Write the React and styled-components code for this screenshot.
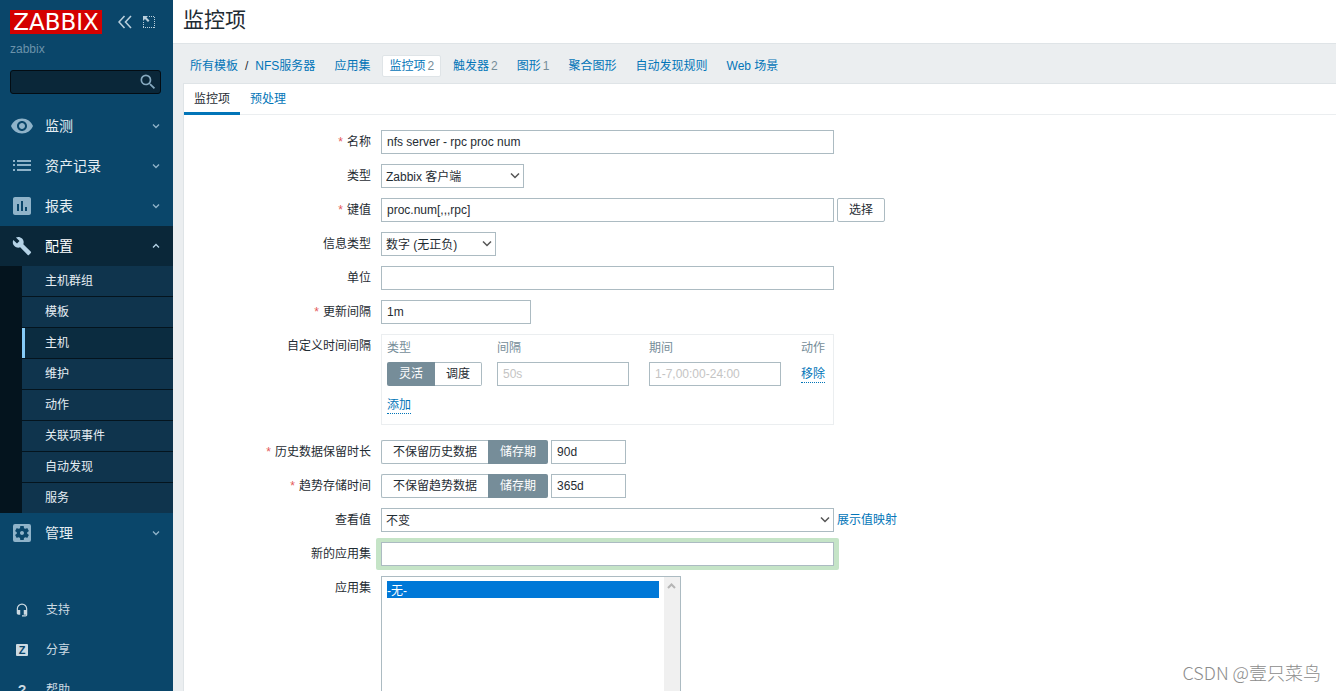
import { useState } from "react";
import styled, { createGlobalStyle, css } from "styled-components";
import {
  MdAssessment,
  MdBuild,
  MdHeadsetMic,
  MdSearch,
  MdSettingsApplications,
  MdVisibility,
} from "react-icons/md";

const ListIcon = () => (
  <svg width="24" height="24" viewBox="0 0 24 24" fill="currentColor">
    <path d="M3 6h2v2H3zM7 6h14v2H7zM3 10h2v2H3zM7 10h14v2H7zM3 15h2v2H3zM7 15h14v2H7z" />
  </svg>
);

const Chevron = ({ up }) => (
  <svg width="8" height="8" viewBox="0 0 8 8" fill="none" stroke="currentColor" strokeWidth="1.3">
    <path d={up ? "M1 5.5 4 2.5 7 5.5" : "M1 2.5 4 5.5 7 2.5"} />
  </svg>
);

const subItems = ["主机群组", "模板", "主机", "维护", "动作", "关联项事件", "自动发现", "服务"];

const crumbs = [
  { text: "应用集" },
  { text: "监控项", count: 2, selected: true },
  { text: "触发器", count: 2 },
  { text: "图形", count: 1 },
  { text: "聚合图形" },
  { text: "自动发现规则" },
  { text: "Web 场景" },
];

const MenuItem = ({ icon, text, open }) => (
  <MenuLink href="#" $open={open}>
    <MenuIcon>{icon}</MenuIcon>
    <span>{text}</span>
    <MenuArrow>
      <Chevron up={open} />
    </MenuArrow>
  </MenuLink>
);

const Sidebar = () => (
  <Aside>
    <LogoRow>
      <Logo href="#">ZABBIX</Logo>
      <IconButton type="button" aria-label="收起">
        <svg width="14" height="14" viewBox="0 0 14 14" fill="none" stroke="currentColor" strokeWidth="1.6">
          <path d="M6.5 1 1 7l5.5 6M13 1 7.5 7 13 13" />
        </svg>
      </IconButton>
      <IconButton type="button" aria-label="隐藏">
        <svg width="14" height="14" viewBox="0 0 14 14" fill="none" stroke="currentColor">
          <path d="M7 1.500h6M12.500 2v11M12 12.500H1M1.500 12V7" strokeDasharray="1 1" />
          <path d="M1 1h5L4.500 2.500 7.500 5.500 6 7 3 4 1 6z" fill="currentColor" stroke="none" />
        </svg>
      </IconButton>
    </LogoRow>
    <ServerName>zabbix</ServerName>
    <Search>
      <input type="text" aria-label="搜索" />
      <button type="submit" aria-label="搜索">
        <MdSearch size={20} />
      </button>
    </Search>
    <nav>
      <MenuItem icon={<MdVisibility size={24} />} text="监测" />
      <MenuItem icon={<ListIcon />} text="资产记录" />
      <MenuItem icon={<MdAssessment size={24} />} text="报表" />
      <MenuItem icon={<MdBuild size={20} />} text="配置" open />
      <SubMenu>
        {subItems.map((item) => (
          <li key={item}>
            <SubLink href="#" $active={item === "主机"}>
              {item}
            </SubLink>
          </li>
        ))}
      </SubMenu>
      <MenuItem icon={<MdSettingsApplications size={24} />} text="管理" />
    </nav>
    <UserNav>
      <UserLink href="#">
        <MenuIcon $light>
          <MdHeadsetMic size={14} />
        </MenuIcon>
        支持
      </UserLink>
      <UserLink href="#">
        <MenuIcon $light>
          <ShareMark>Z</ShareMark>
        </MenuIcon>
        分享
      </UserLink>
      <UserLink href="#">
        <MenuIcon $light>
          <HelpMark>?</HelpMark>
        </MenuIcon>
        帮助
      </UserLink>
    </UserNav>
  </Aside>
);

const Field = ({ label, id, required, children }) => (
  <Row>
    <Label htmlFor={id} $required={required}>
      {label}
    </Label>
    <Control>{children}</Control>
  </Row>
);

const Dropdown = ({ id, width, options }) => (
  <SelectWrap $width={width}>
    <select id={id}>
      {options.map((option) => (
        <option key={option}>{option}</option>
      ))}
    </select>
    <svg width="10" height="8" viewBox="0 0 10 8" fill="none" stroke="#555" strokeWidth="1.5">
      <path d="M1 1.500 5 5.500 9 1.500" />
    </svg>
  </SelectWrap>
);

const RadioGroup = ({ name, options, initial }) => {
  const [value, setValue] = useState(initial);

  return (
    <Segments id={name} role="radiogroup">
      {options.map((option) => (
        <label key={option}>
          <input
            type="radio"
            name={name}
            checked={value === option}
            onChange={() => setValue(option)}
          />
          <span>{option}</span>
        </label>
      ))}
    </Segments>
  );
};

const ItemForm = () => (
  <Form>
    <Field label="名称" id="name" required>
      <TextInput id="name" defaultValue="nfs server - rpc proc num" />
    </Field>
    <Field label="类型" id="type">
      <Dropdown id="type" width={143} options={["Zabbix 客户端"]} />
    </Field>
    <Field label="键值" id="key" required>
      <TextInput id="key" defaultValue="proc.num[,,,rpc]" />
      <Button type="button">选择</Button>
    </Field>
    <Field label="信息类型" id="value_type">
      <Dropdown id="value_type" width={115} options={["数字 (无正负)"]} />
    </Field>
    <Field label="单位" id="units">
      <TextInput id="units" />
    </Field>
    <Field label="更新间隔" id="delay" required>
      <TextInput id="delay" $width={150} defaultValue="1m" />
    </Field>
    <Field label="自定义时间间隔" id="interval_type">
      <IntervalBox>
        <table>
          <thead>
            <tr>
              <th>类型</th>
              <th>间隔</th>
              <th>期间</th>
              <th>动作</th>
            </tr>
          </thead>
          <tbody>
            <tr>
              <td>
                <RadioGroup name="interval_type" options={["灵活", "调度"]} initial="灵活" />
              </td>
              <td>
                <TextInput $width={132} placeholder="50s" aria-label="间隔" />
              </td>
              <td>
                <TextInput $width={132} placeholder="1-7,00:00-24:00" aria-label="期间" />
              </td>
              <td>
                <DottedButton type="button">移除</DottedButton>
              </td>
            </tr>
          </tbody>
        </table>
        <DottedButton type="button">添加</DottedButton>
      </IntervalBox>
    </Field>
    <Field label="历史数据保留时长" id="history" required>
      <RadioGroup name="history_mode" options={["不保留历史数据", "储存期"]} initial="储存期" />
      <TextInput id="history" $width={75} defaultValue="90d" />
    </Field>
    <Field label="趋势存储时间" id="trends" required>
      <RadioGroup name="trends_mode" options={["不保留趋势数据", "储存期"]} initial="储存期" />
      <TextInput id="trends" $width={75} defaultValue="365d" />
    </Field>
    <Field label="查看值" id="valuemap">
      <Dropdown id="valuemap" width={453} options={["不变"]} />
      <Link href="#">展示值映射</Link>
    </Field>
    <Field label="新的应用集" id="new_application">
      <Highlight>
        <TextInput id="new_application" />
      </Highlight>
    </Field>
    <Field label="应用集" id="applications">
      <ListBox>
        <select id="applications" multiple defaultValue={["0"]}>
          <option value="0">-无-</option>
        </select>
        <ScrollTrack>
          <svg width="9" height="8" viewBox="0 0 9 8" fill="none" stroke="#b5b5b5" strokeWidth="2">
            <path d="M1 6 4.500 2.500 8 6" />
          </svg>
        </ScrollTrack>
      </ListBox>
    </Field>
  </Form>
);

const App = () => (
  <>
    <GlobalStyle />
    <Page>
      <Sidebar />
      <Main>
        <Header>
          <h1>监控项</h1>
        </Header>
        <Crumbs>
          <Path>
            <Link href="#">所有模板</Link>
            <span>/</span>
            <Link href="#">NFS服务器</Link>
          </Path>
          {crumbs.map(({ text, count, selected }) => (
            <Crumb key={text} href="#" $selected={selected}>
              {text}
              {count && <small>{count}</small>}
            </Crumb>
          ))}
        </Crumbs>
        <Card>
          <Tabs role="tablist">
            <Tab type="button" role="tab" aria-selected="true" $active>
              监控项
            </Tab>
            <Tab type="button" role="tab" aria-selected="false">
              预处理
            </Tab>
          </Tabs>
          <ItemForm />
        </Card>
      </Main>
      <Watermark>CSDN @壹只菜鸟</Watermark>
    </Page>
  </>
);

const GlobalStyle = createGlobalStyle`
  * {
    box-sizing: border-box;
  }

  body {
    margin: 0;
    color: #1f2c33;
    background: #ebeef0;
  }

  body, input, select, button {
    font-family: "Liberation Sans", "Noto Sans CJK SC", sans-serif;
    font-size: 12px;
    line-height: 18px;
  }

  a {
    text-decoration: none;
  }

  svg {
    display: block;
  }
`;

const Page = styled.div`
  position: relative;
  display: flex;
  height: 100vh;
  overflow: hidden;
`;

const Aside = styled.aside`
  flex: 0 0 173px;
  min-width: 0;
  background: #0a466a;
`;

const LogoRow = styled.div`
  display: flex;
  align-items: center;
  gap: 10px;
  padding: 10px 0 0 10px;
`;

const Logo = styled.a`
  width: 92px;
  margin-right: 6px;
  background: #d40000;
  color: #fff;
  font-family: "DejaVu Sans", sans-serif;
  font-size: 23px;
  line-height: 24px;
  text-align: center;
`;

const IconButton = styled.button`
  padding: 0;
  border: 0;
  background: none;
  color: #b9cedb;
`;

const ServerName = styled.div`
  padding: 6px 10px 0;
  color: #6c93aa;
`;

const Search = styled.form`
  display: flex;
  align-items: center;
  height: 24px;
  margin: 12px 12px 12px 10px;
  border: 1px solid #030c13;
  border-radius: 3px;
  background: #0a2739;

  input {
    flex: 1;
    width: 0;
    min-width: 0;
    padding: 0 6px;
    border: 0;
    background: none;
    color: #fff;
    outline: none;
  }

  button {
    padding: 0 2px 0 0;
    border: 0;
    background: none;
    color: #86a9bf;
  }
`;

const MenuLink = styled.a`
  display: flex;
  align-items: center;
  height: 40px;
  padding-right: 13px;
  background: ${({ $open }) => ($open ? "#0a2739" : "transparent")};
  color: ${({ $open }) => ($open ? "#fff" : "#e6eef3")};
  font-size: 14px;
  line-height: 20px;

  svg {
    color: ${({ $open }) => ($open ? "#b4d2e6" : "#8fb3c9")};
  }
`;

const MenuIcon = styled.span`
  display: flex;
  justify-content: center;
  width: ${({ $light }) => ($light ? "46px" : "45px")};
  padding-right: ${({ $light }) => ($light ? "2px" : "1px")};
  color: #ccdae2;
`;

const MenuArrow = styled.span`
  margin-left: auto;
`;

const SubMenu = styled.ul`
  margin: 0;
  padding: 0;
  border-left: 22px solid #04141e;
  background: #04141e;
  list-style: none;

  li + li {
    padding-top: 1px;
  }
`;

const SubLink = styled.a`
  display: block;
  padding: 6px 0 6px 20px;
  border-left: 3px solid ${({ $active }) => ($active ? "#86cbf7" : "#0f344d")};
  background: ${({ $active }) => ($active ? "#0b2c40" : "#0f344d")};
  color: #e6eef3;
`;

const UserNav = styled.nav`
  margin-top: 37px;
`;

const UserLink = styled.a`
  display: flex;
  align-items: center;
  height: 40px;
  color: #ccdae2;
`;

const ShareMark = styled.span`
  width: 12px;
  border-radius: 1px;
  background: #ccdae2;
  color: #0a466a;
  font-size: 11px;
  font-weight: 700;
  line-height: 12px;
  text-align: center;
`;

const HelpMark = styled.span`
  font-size: 14px;
  font-weight: 700;
`;

const Main = styled.main`
  flex: 1;
  min-width: 0;
`;

const Header = styled.header`
  padding: 5px 10px 8px;
  border-bottom: 1px solid #dfe4e7;
  background: #fff;

  h1 {
    margin: 0;
    font-size: 21px;
    font-weight: 400;
    line-height: 30px;
  }
`;

const Crumbs = styled.nav`
  display: flex;
  align-items: center;
  gap: 5px;
  height: 39px;
  padding: 4px 17px 0;
`;

const Path = styled.div`
  display: flex;
  gap: 7px;
  margin-right: 7px;
`;

const Link = styled.a`
  color: #0275b8;
`;

const Crumb = styled.a`
  padding: 1px 6px;
  border: 1px solid transparent;
  border-radius: 2px;
  color: #0275b8;

  ${({ $selected }) =>
    $selected &&
    css`
      border-color: #dfe4e7;
      background: #fff;
    `}

  small {
    margin-left: 2px;
    color: #768d99;
    font-size: 12px;
  }
`;

const Card = styled.section`
  margin-left: 10px;
  border: 1px solid #dfe4e7;
  border-right: 0;
  background: #fff;
`;

const Tabs = styled.div`
  display: flex;
  border-bottom: 1px solid #ebeef0;
`;

const Tab = styled.button`
  height: 31px;
  margin-bottom: -1px;
  padding: 2px 10px 0;
  border: 0;
  border-bottom: 3px solid ${({ $active }) => ($active ? "#0275b8" : "transparent")};
  background: none;
  color: ${({ $active }) => ($active ? "#1f2c33" : "#0275b8")};
`;

const Form = styled.form`
  display: flex;
  flex-direction: column;
  gap: 10px;
  padding: 15px 10px 20px 0;
`;

const Row = styled.div`
  display: flex;
  gap: 10px;
`;

const Label = styled.label`
  flex: 0 0 187px;
  padding-top: 3px;
  text-align: right;

  ${({ $required }) =>
    $required &&
    css`
      &::before {
        content: "*";
        margin-right: 4px;
        color: #e45959;
      }
    `}
`;

const Control = styled.div`
  display: flex;
  flex: 1;
  align-items: center;
  gap: 3px;
  min-width: 0;
`;

const TextInput = styled.input.attrs({ type: "text" })`
  width: 100%;
  max-width: ${({ $width = 453 }) => $width}px;
  height: 24px;
  padding: 0 5px;
  border: 1px solid #acbbc2;
  border-radius: 0;
  background: #fff;
  color: #1f2c33;
  outline: none;

  &::placeholder {
    color: #c4c4c4;
  }
`;

const Button = styled.button`
  height: 24px;
  padding: 0 11px;
  border: 1px solid #acbbc2;
  border-radius: 2px;
  background: #fff;
  color: #1f2c33;
`;

const SelectWrap = styled.div`
  display: grid;
  width: 100%;
  max-width: ${({ $width }) => $width}px;

  select,
  svg {
    grid-area: 1 / 1;
  }

  select {
    height: 24px;
    padding: 2px 20px 0 4px;
    border: 1px solid #acbbc2;
    border-radius: 0;
    background: #fff;
    color: #1f2c33;
    appearance: none;
  }

  svg {
    align-self: center;
    justify-self: end;
    margin-right: 4px;
    pointer-events: none;
  }
`;

const Segments = styled.div`
  display: flex;
  flex: none;

  label {
    position: relative;
  }

  input {
    position: absolute;
    margin: 0;
    opacity: 0;
  }

  span {
    display: block;
    padding: 2px 11px;
    border: 1px solid #acbbc2;
  }

  label:first-child span {
    border-radius: 2px 0 0 2px;
    border-right: 0;
  }

  label:last-child span {
    border-radius: 0 2px 2px 0;
    border-left-width: 0;
  }

  input:checked + span {
    padding: 3px 12px;
    border: 0;
    background: #768d99;
    color: #fff;
  }
`;

const IntervalBox = styled.div`
  width: 100%;
  max-width: 453px;
  margin-bottom: 5px;
  padding: 4px 5px 10px;
  border: 1px solid #ebeef0;

  table {
    width: 100%;
    margin-bottom: 11px;
    border-collapse: collapse;
    table-layout: fixed;
  }

  th {
    width: 152px;
    padding: 0 0 5px;
    color: #768d99;
    font-weight: 400;
    text-align: left;
  }

  th:first-child {
    width: 110px;
  }

  th:last-child {
    width: auto;
  }

  td {
    padding: 0;
  }
`;

const DottedButton = styled.button`
  display: block;
  padding: 0;
  border: 0;
  border-bottom: 1px dotted #0275b8;
  background: none;
  color: #0275b8;
  line-height: 16px;
`;

const Highlight = styled.div`
  display: flex;
  width: 100%;
  max-width: 463px;
  margin: -4px -5px;
  padding: 4px 5px;
  border-radius: 2px;
  background: #c5e4c7;
`;

const ListBox = styled.div`
  display: flex;
  width: 300px;
  height: 200px;
  border: 1px solid #acbbc2;

  select {
    flex: 1;
    padding: 4px 5px;
    border: 0;
    background: #fff;
    overflow: hidden;
    outline: none;
  }

  option {
    min-height: 16px;
    padding: 0;
    line-height: 16px;
  }

  option:checked {
    background: #0078d7 linear-gradient(#0078d7, #0078d7);
    color: #fff;
    -webkit-text-fill-color: #fff;
  }
`;

const ScrollTrack = styled.div`
  width: 16px;
  padding: 5px 3px;
  background: #f0f0f0;
`;

const Watermark = styled.div`
  position: absolute;
  right: 15px;
  bottom: 7px;
  color: #8c8c8c;
  font-family: "Noto Sans CJK SC", sans-serif;
  font-size: 18px;
  font-weight: 300;
  line-height: 24px;
`;

export default App;
